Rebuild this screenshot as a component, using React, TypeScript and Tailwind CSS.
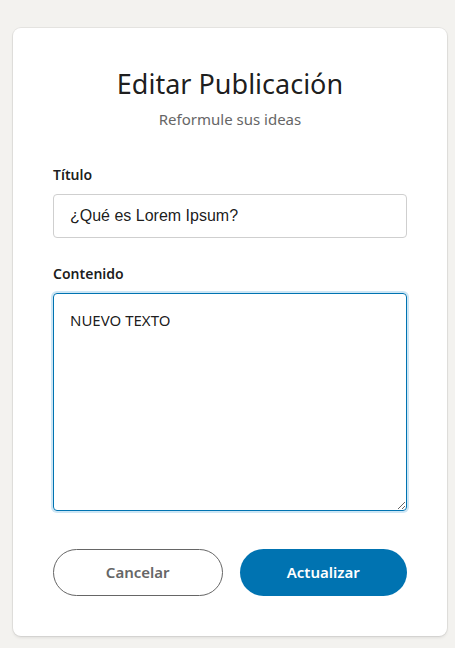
import React, { useState } from "react";

const App: React.FC = () => {
  const [titulo, setTitulo] = useState("¿Qué es Lorem Ipsum?");
  const [contenido, setContenido] = useState("NUEVO TEXTO");

  return (
    <div className="min-h-screen bg-[#f3f2ef] pl-[13px] pr-[8px] pt-[28px] pb-[12px] font-['Noto_Sans',sans-serif]">
      <div className="rounded-lg bg-white px-[40px] pt-[36px] pb-[40px] shadow-[0_0_0_1px_rgba(0,0,0,0.06),0_2px_3px_rgba(0,0,0,0.08)]">
        <h1 className="text-center text-[27px] leading-[40px] font-normal text-[rgba(0,0,0,0.9)]">
          Editar Publicación
        </h1>
        <p className="mt-[5px] text-center text-[15px] leading-[20px] text-[#666]">
          Reformule sus ideas
        </p>

        <form className="mt-[36px]" onSubmit={(e) => e.preventDefault()}>
          <label className="block text-[14px] leading-[20px] font-semibold text-[rgba(0,0,0,0.9)]">
            Título
          </label>
          <input
            value={titulo}
            onChange={(e) => setTitulo(e.target.value)}
            className="mt-[9px] block h-[44px] w-full rounded-[4px] border border-[#cfcfcf] px-[16px] font-['Liberation_Sans',sans-serif] text-[16px] text-[rgba(0,0,0,0.9)] outline-none"
          />

          <label className="mt-[26px] block text-[14px] leading-[20px] font-semibold text-[rgba(0,0,0,0.9)]">
            Contenido
          </label>
          <textarea
            value={contenido}
            onChange={(e) => setContenido(e.target.value)}
            className="mt-[9px] block h-[218px] w-full rounded-[4px] border border-[#0073b1] px-[16px] py-[16px] text-[15px] leading-[20px] text-[rgba(0,0,0,0.9)] shadow-[0_0_0_2px_#cde6f5] outline-none"
          />

          <div className="mt-[38px] flex gap-[17px]">
            <button
              type="button"
              className="h-[47px] flex-1 rounded-full border border-[#666] bg-white text-[15px] font-semibold text-[#666]"
            >
              Cancelar
            </button>
            <button
              type="submit"
              className="h-[47px] flex-1 rounded-full bg-[#0073b1] text-[15px] font-semibold text-white"
            >
              Actualizar
            </button>
          </div>
        </form>
      </div>
    </div>
  );
};

export default App;
